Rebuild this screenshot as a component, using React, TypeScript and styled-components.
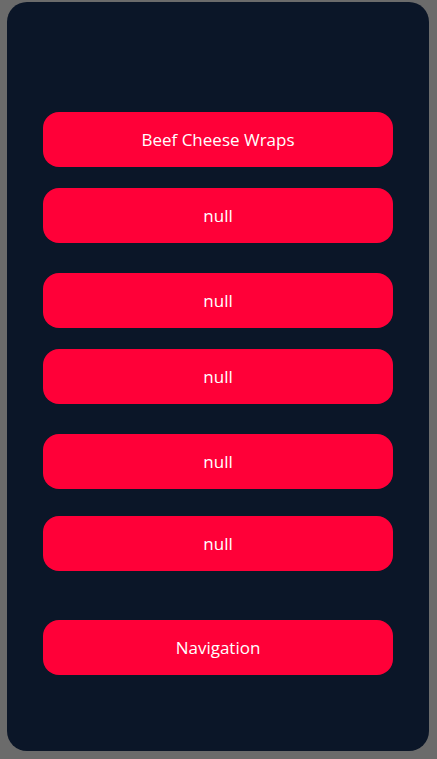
import React from "react";
import styled, { createGlobalStyle } from "styled-components";

const Global = createGlobalStyle`
  html, body { margin: 0; padding: 0; background: #6b6b6b; }
  body { font-family: "Open Sans", "Noto Sans", sans-serif; }
`;

const Frame = styled.div`
  width: 437px;
  height: 759px;
  box-sizing: border-box;
  padding: 2px 8px 8px 7px;
  background: #6b6b6b;
`;

const Panel = styled.div`
  height: 100%;
  box-sizing: border-box;
  background: #0b1628;
  border-radius: 20px;
  padding: 110px 36px 0 36px;
  display: flex;
  flex-direction: column;
`;

const Button = styled.button<{ $gap: number }>`
  margin-top: ${(p) => p.$gap}px;
  height: 55px;
  width: 350px;
  border: none;
  border-radius: 16px;
  background: #ff0038;
  color: #ffffff;
  font-family: "Open Sans", "Noto Sans", sans-serif;
  font-size: 17px;
  display: flex;
  align-items: center;
  justify-content: center;
  padding: 0;
  cursor: pointer;
`;

const items: { label: string; gap: number }[] = [
  { label: "Beef Cheese Wraps", gap: 0 },
  { label: "null", gap: 21 },
  { label: "null", gap: 30 },
  { label: "null", gap: 21 },
  { label: "null", gap: 30 },
  { label: "null", gap: 27 },
  { label: "Navigation", gap: 49 },
];

export default function App() {
  return (
    <>
      <Global />
      <Frame>
        <Panel>
          {items.map((it, i) => (
            <Button key={i} $gap={it.gap}>
              {it.label}
            </Button>
          ))}
        </Panel>
      </Frame>
    </>
  );
}
